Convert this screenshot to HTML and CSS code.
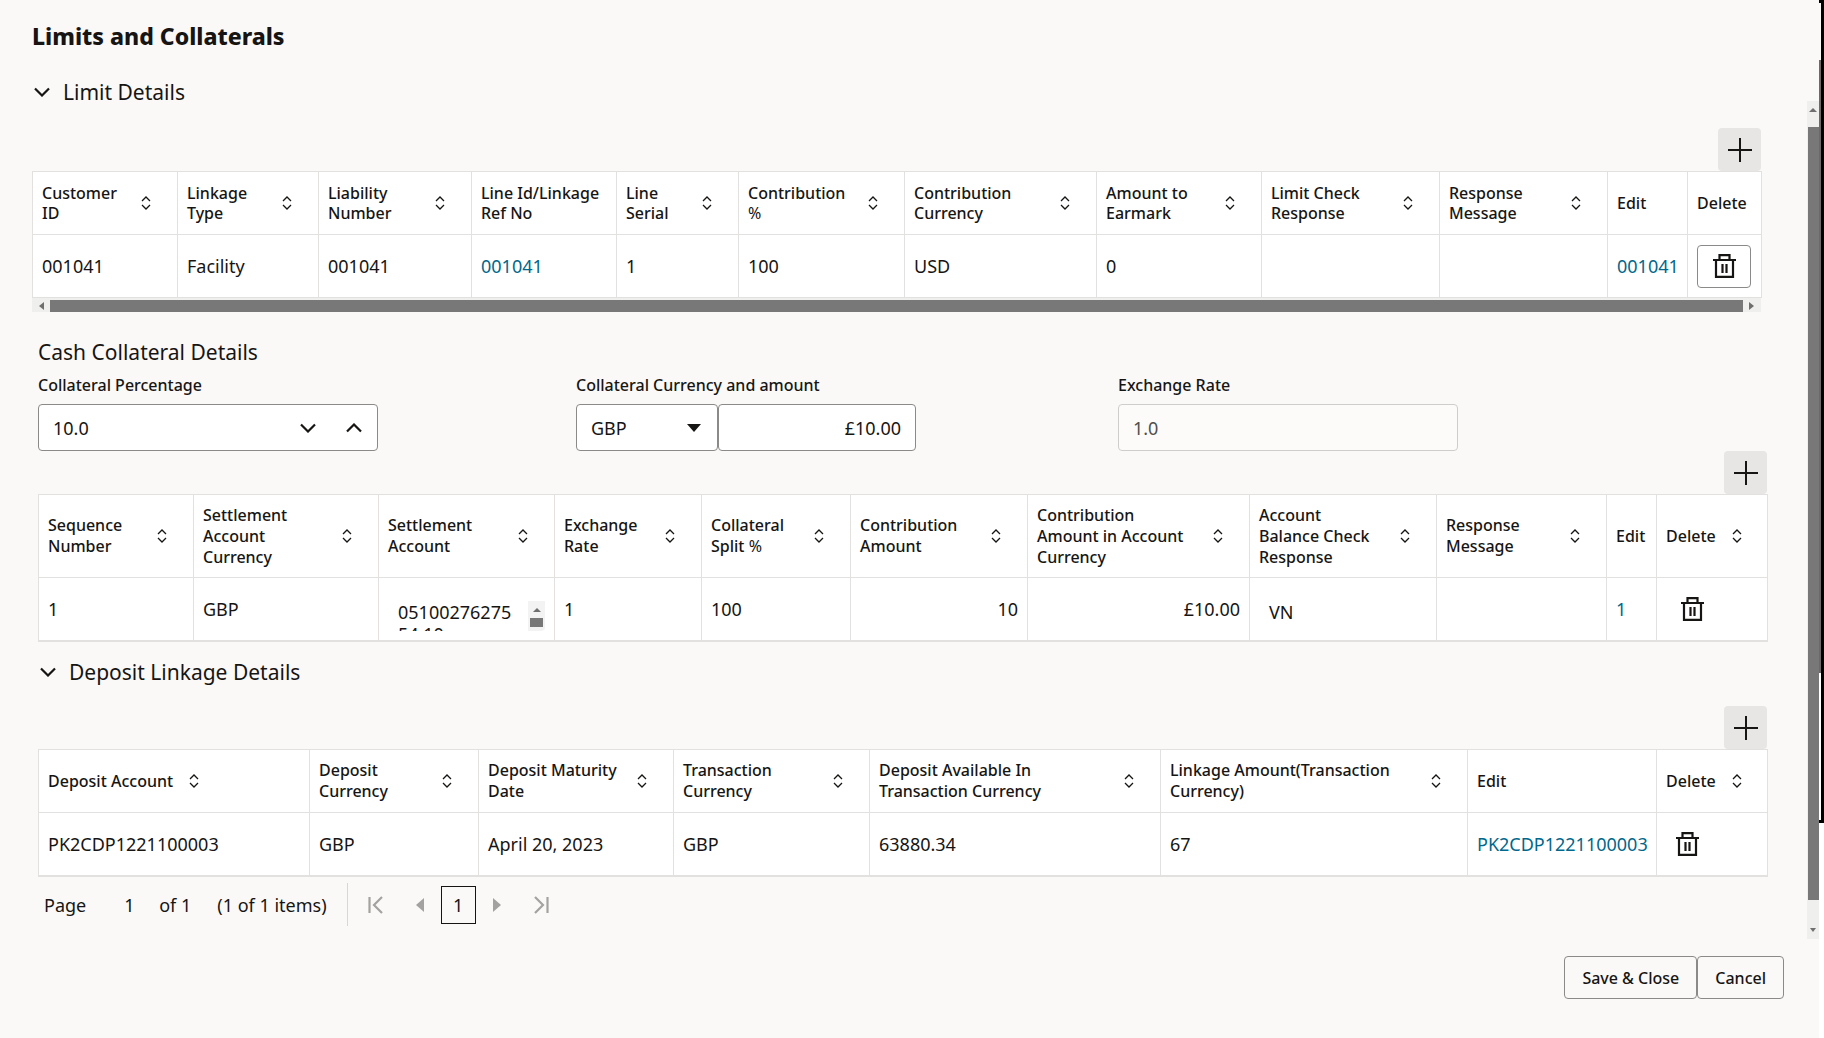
FILE: index.html
```
<!DOCTYPE html>
<html lang="en">
<head>
  <meta charset="UTF-8">
  <title>Limits and Collaterals</title>
  <link rel="stylesheet" href="styles.css">
</head>
<body>

  <!-- shared icons -->
  <svg class="sprite" aria-hidden="true">
    <symbol id="sort" viewBox="0 0 10 14"><path d="M1 5l4-4 4 4M1 9l4 4 4-4" fill="none" stroke="#161513" stroke-width="1.3"/></symbol>
    <symbol id="down" viewBox="0 0 16 10"><path d="M1 1.5l7 7 7-7" fill="none" stroke="#161513" stroke-width="2.2"/></symbol>
    <symbol id="up" viewBox="0 0 16 10"><path d="M1 8.5l7-7 7 7" fill="none" stroke="#161513" stroke-width="2.2"/></symbol>
    <symbol id="plus" viewBox="0 0 24 24"><path d="M12 0v24M0 12h24" fill="none" stroke="#161513" stroke-width="2"/></symbol>
    <symbol id="trash" viewBox="0 0 23 24"><path d="M0 6h23M6.500 6V1.200h10V6M3 6v16.800h17V6M9.500 10v9M13.500 10v9" fill="none" stroke="#161513" stroke-width="2.200"/></symbol>
  </svg>

  <main class="dialog">
    <h1>Limits and Collaterals</h1>

    <section class="limits">
      <h2><button class="collapse" aria-expanded="true"><svg width="16" height="10"><use href="#down"/></svg>Limit Details</button></h2>
      <button class="add" aria-label="Add limit"><svg width="24" height="24"><use href="#plus"/></svg></button>
      <table>
        <colgroup>
          <col width="145"><col width="141"><col width="153"><col width="145"><col width="122"><col width="166">
          <col width="192"><col width="165"><col width="178"><col width="168"><col width="80"><col width="74">
        </colgroup>
        <thead>
          <tr>
            <th><div class="head"><span>Customer ID</span><button class="sort" aria-label="Sort"><svg width="10" height="14"><use href="#sort"/></svg></button></div></th>
            <th><div class="head"><span>Linkage Type</span><button class="sort" aria-label="Sort"><svg width="10" height="14"><use href="#sort"/></svg></button></div></th>
            <th><div class="head"><span>Liability Number</span><button class="sort" aria-label="Sort"><svg width="10" height="14"><use href="#sort"/></svg></button></div></th>
            <th>Line Id/Linkage<br>Ref No</th>
            <th><div class="head"><span>Line Serial</span><button class="sort" aria-label="Sort"><svg width="10" height="14"><use href="#sort"/></svg></button></div></th>
            <th><div class="head"><span>Contribution <span class="thin">%</span></span><button class="sort" aria-label="Sort"><svg width="10" height="14"><use href="#sort"/></svg></button></div></th>
            <th><div class="head"><span>Contribution<br>Currency</span><button class="sort" aria-label="Sort"><svg width="10" height="14"><use href="#sort"/></svg></button></div></th>
            <th><div class="head"><span>Amount to Earmark</span><button class="sort" aria-label="Sort"><svg width="10" height="14"><use href="#sort"/></svg></button></div></th>
            <th><div class="head"><span>Limit Check<br>Response</span><button class="sort" aria-label="Sort"><svg width="10" height="14"><use href="#sort"/></svg></button></div></th>
            <th><div class="head"><span>Response Message</span><button class="sort" aria-label="Sort"><svg width="10" height="14"><use href="#sort"/></svg></button></div></th>
            <th>Edit</th>
            <th>Delete</th>
          </tr>
        </thead>
        <tbody>
          <tr>
            <td>001041</td>
            <td>Facility</td>
            <td>001041</td>
            <td><a href="#">001041</a></td>
            <td>1</td>
            <td>100</td>
            <td>USD</td>
            <td>0</td>
            <td></td>
            <td></td>
            <td><a href="#">001041</a></td>
            <td><button class="trash boxed" aria-label="Delete"><svg width="23" height="24"><use href="#trash"/></svg></button></td>
          </tr>
        </tbody>
      </table>
      <div class="hscroll">
        <svg width="5" height="8"><path d="M5 0v8L0 4z" fill="#6f6f6f"/></svg>
        <div class="hthumb"></div>
        <svg width="5" height="8"><path d="M0 0v8l5-4z" fill="#6f6f6f"/></svg>
      </div>
    </section>

    <section class="cash">
      <h2>Cash Collateral Details</h2>
      <div class="fields">
        <div class="field">
          <label for="percent">Collateral Percentage</label>
          <div class="control">
            <input type="text" id="percent" value="10.0">
            <button class="step" aria-label="Decrease"><svg width="16" height="10"><use href="#down"/></svg></button>
            <button class="step" aria-label="Increase"><svg width="16" height="10"><use href="#up"/></svg></button>
          </div>
        </div>
        <div class="field">
          <label for="amount">Collateral Currency and amount</label>
          <div class="pair">
            <div class="control currency">
              <select id="currency" aria-label="Currency"><option>GBP</option></select>
              <svg width="14" height="8"><path d="M0 0h14L7 8z" fill="#161513"/></svg>
            </div>
            <div class="control money"><input type="text" id="amount" value="£10.00"></div>
          </div>
        </div>
        <div class="field">
          <label for="rate">Exchange Rate</label>
          <div class="control off"><input type="text" id="rate" value="1.0" disabled></div>
        </div>
      </div>

      <button class="add" aria-label="Add collateral"><svg width="24" height="24"><use href="#plus"/></svg></button>
      <table class="closed">
        <colgroup>
          <col width="155"><col width="185"><col width="176"><col width="147"><col width="149"><col width="177">
          <col width="222"><col width="187"><col width="170"><col width="50"><col width="111">
        </colgroup>
        <thead class="tall">
          <tr>
            <th><div class="head"><span>Sequence Number</span><button class="sort" aria-label="Sort"><svg width="10" height="14"><use href="#sort"/></svg></button></div></th>
            <th><div class="head"><span>Settlement<br>Account<br>Currency</span><button class="sort" aria-label="Sort"><svg width="10" height="14"><use href="#sort"/></svg></button></div></th>
            <th><div class="head"><span>Settlement<br>Account</span><button class="sort" aria-label="Sort"><svg width="10" height="14"><use href="#sort"/></svg></button></div></th>
            <th><div class="head"><span>Exchange Rate</span><button class="sort" aria-label="Sort"><svg width="10" height="14"><use href="#sort"/></svg></button></div></th>
            <th><div class="head"><span>Collateral<br>Split <span class="thin">%</span></span><button class="sort" aria-label="Sort"><svg width="10" height="14"><use href="#sort"/></svg></button></div></th>
            <th><div class="head"><span>Contribution Amount</span><button class="sort" aria-label="Sort"><svg width="10" height="14"><use href="#sort"/></svg></button></div></th>
            <th><div class="head"><span>Contribution<br>Amount in Account Currency</span><button class="sort" aria-label="Sort"><svg width="10" height="14"><use href="#sort"/></svg></button></div></th>
            <th><div class="head"><span>Account<br>Balance Check Response</span><button class="sort" aria-label="Sort"><svg width="10" height="14"><use href="#sort"/></svg></button></div></th>
            <th><div class="head"><span>Response<br>Message</span><button class="sort" aria-label="Sort"><svg width="10" height="14"><use href="#sort"/></svg></button></div></th>
            <th>Edit</th>
            <th><div class="head fit"><span>Delete</span><button class="sort" aria-label="Sort"><svg width="10" height="14"><use href="#sort"/></svg></button></div></th>
          </tr>
        </thead>
        <tbody>
          <tr>
            <td>1</td>
            <td>GBP</td>
            <td>
              <div class="account">
                <span>05100276275<br>54 10</span>
                <div class="vscroll">
                  <svg width="8" height="4"><path d="M0 4h8L4 0z" fill="#6f6f6f"/></svg>
                  <div class="vthumb"></div>
                </div>
              </div>
            </td>
            <td>1</td>
            <td>100</td>
            <td class="num">10</td>
            <td class="num">£10.00</td>
            <td class="inset">VN</td>
            <td></td>
            <td><a href="#">1</a></td>
            <td><button class="trash wide" aria-label="Delete"><svg width="23" height="24"><use href="#trash"/></svg></button></td>
          </tr>
        </tbody>
      </table>
    </section>

    <section class="deposit">
      <h2><button class="collapse" aria-expanded="true"><svg width="16" height="10"><use href="#down"/></svg>Deposit Linkage Details</button></h2>
      <button class="add" aria-label="Add deposit"><svg width="24" height="24"><use href="#plus"/></svg></button>
      <table class="closed">
        <colgroup>
          <col width="271"><col width="169"><col width="195"><col width="196"><col width="291"><col width="307"><col width="189"><col width="111">
        </colgroup>
        <thead>
          <tr>
            <th><div class="head fit"><span>Deposit Account</span><button class="sort" aria-label="Sort"><svg width="10" height="14"><use href="#sort"/></svg></button></div></th>
            <th><div class="head"><span>Deposit<br>Currency</span><button class="sort" aria-label="Sort"><svg width="10" height="14"><use href="#sort"/></svg></button></div></th>
            <th><div class="head"><span>Deposit Maturity<br>Date</span><button class="sort" aria-label="Sort"><svg width="10" height="14"><use href="#sort"/></svg></button></div></th>
            <th><div class="head"><span>Transaction<br>Currency</span><button class="sort" aria-label="Sort"><svg width="10" height="14"><use href="#sort"/></svg></button></div></th>
            <th><div class="head"><span>Deposit Available In<br>Transaction Currency</span><button class="sort" aria-label="Sort"><svg width="10" height="14"><use href="#sort"/></svg></button></div></th>
            <th><div class="head"><span>Linkage Amount(Transaction Currency)</span><button class="sort" aria-label="Sort"><svg width="10" height="14"><use href="#sort"/></svg></button></div></th>
            <th>Edit</th>
            <th><div class="head fit"><span>Delete</span><button class="sort" aria-label="Sort"><svg width="10" height="14"><use href="#sort"/></svg></button></div></th>
          </tr>
        </thead>
        <tbody>
          <tr>
            <td>PK2CDP1221100003</td>
            <td>GBP</td>
            <td>April 20, 2023</td>
            <td>GBP</td>
            <td>63880.34</td>
            <td>67</td>
            <td><a href="#">PK2CDP1221100003</a></td>
            <td><button class="trash" aria-label="Delete"><svg width="23" height="24"><use href="#trash"/></svg></button></td>
          </tr>
        </tbody>
      </table>

      <div class="pager">
        <div class="pages">
          <label for="page">Page</label>
          <input type="text" id="page" value="1">
          <span class="of">of 1</span>
          <span>(1 of 1 items)</span>
        </div>
        <button aria-label="First page" disabled><svg width="16" height="18"><path d="M1.500 1v16M14 1L6 9l8 8" fill="none" stroke="#a3a2a0" stroke-width="2.200"/></svg></button>
        <button aria-label="Previous page" disabled><svg width="8" height="14"><path d="M8 0v14L0 7z" fill="#a3a2a0"/></svg></button>
        <button class="current">1</button>
        <button aria-label="Next page" disabled><svg width="8" height="14"><path d="M0 0v14l8-7z" fill="#a3a2a0"/></svg></button>
        <button aria-label="Last page" disabled><svg width="16" height="18"><path d="M14.500 1v16M2 1l8 8-8 8" fill="none" stroke="#a3a2a0" stroke-width="2.200"/></svg></button>
      </div>
    </section>

    <div class="actions">
      <button>Save &amp; Close</button>
      <button>Cancel</button>
    </div>
  </main>

  <div class="rail">
    <div class="track">
      <svg width="8" height="4"><path d="M0 4h8L4 0z" fill="#6f6f6f"/></svg>
      <div class="thumb"></div>
      <svg width="6" height="4"><path d="M0 0h6L3 4z" fill="#6f6f6f"/></svg>
    </div>
  </div>
  <div class="edge"><div class="frame"></div></div>

</body>
</html>
```
FILE: styles.css
```
* {
  box-sizing: border-box;
}
body {
  margin: 0;
  display: flex;
  min-height: 100vh;
  background: #fbf9f8;
  color: #161513;
  font-family: "Noto Sans", "Open Sans", sans-serif;
  font-size: 18px;
  line-height: 24px;
  font-weight: 400;
}
button, input, select {
  font: inherit;
  color: inherit;
  margin: 0;
  padding: 0;
  border: none;
  background: none;
}
button {
  cursor: pointer;
}
svg {
  display: block;
  flex: none;
}
a {
  color: #00688c;
  text-decoration: none;
}
.sprite {
  position: absolute;
  width: 0;
  height: 0;
}

.dialog {
  flex: 1;
  min-width: 0;
  padding-top: 20px;
}
h1 {
  margin: 0 32px 26px;
  font-size: 23px;
  line-height: 32px;
  font-weight: 800;
}
h2 {
  margin: 0;
  font-size: 21px;
  line-height: 28px;
  font-weight: 450;
}
.limits {
  margin: 0 46px 0 32px;
}
.cash, .deposit {
  margin: 0 40px 0 38px;
}
.cash {
  padding-top: 26px;
}
.deposit {
  padding-top: 16px;
}
.collapse {
  display: flex;
  align-items: center;
  gap: 13px;
  padding-left: 2px;
}
.add {
  display: flex;
  align-items: center;
  justify-content: center;
  width: 43px;
  height: 43px;
  margin-left: auto;
  border-radius: 4px;
  background: #e8e6e4;
}
h2 + .add {
  margin-top: 22px;
}
.deposit h2 + .add {
  margin-top: 20px;
}

/* tables */
table {
  width: 100%;
  table-layout: fixed;
  border-collapse: separate;
  border-spacing: 0;
  border-top: 1px solid #e2e1df;
  border-left: 1px solid #e2e1df;
  background: white;
}
th, td {
  height: 63px;
  padding: 0 9px;
  border-right: 1px solid #e2e1df;
  border-bottom: 1px solid #e2e1df;
  text-align: left;
  vertical-align: middle;
}
th {
  font-size: 16px;
  line-height: 20px;
  font-weight: 550;
  white-space: nowrap;
}
.closed th {
  line-height: 21px;
}
.closed td {
  height: 64px;
  border-bottom-width: 2px;
}
.tall th {
  height: 83px;
}
.head {
  display: flex;
  align-items: center;
  gap: 16px;
  padding-right: 17px;
}
.head > span {
  flex: 1;
  white-space: normal;
}
.head.fit > span {
  flex: none;
}
.thin {
  font-weight: 400;
}
td.num {
  text-align: right;
}
td.inset {
  padding: 6px 0 0 19px;
}
.trash {
  display: flex;
  align-items: center;
  margin-left: 10px;
}
.trash.wide {
  margin-left: 15px;
}
.trash.boxed {
  justify-content: center;
  width: 54px;
  height: 43px;
  margin-left: 0;
  border: 1px solid #8b8a88;
  border-radius: 4px;
}

.hscroll {
  display: flex;
  align-items: center;
  gap: 6px;
  height: 14px;
  padding: 2px 7px 0;
  background: #efefed;
}
.hthumb {
  flex: 1;
  height: 12px;
  background: #787878;
}

.account {
  display: flex;
  justify-content: space-between;
  height: 30px;
  margin-top: 14px;
  padding-left: 10px;
  line-height: 22px;
  overflow: hidden;
}
.vscroll {
  width: 17px;
  padding-top: 7px;
  background: #f3f3f3;
  border-radius: 0 0 4px 0;
}
.vscroll svg {
  margin: 0 auto 6px;
}
.vthumb {
  width: 13px;
  height: 9px;
  margin: 0 auto;
  background: #787878;
}

/* form */
.fields {
  display: grid;
  grid-template-columns: 538fr 542fr 340px;
  margin-top: 9px;
  margin-right: 309px;
}
.field {
  width: 340px;
}
label {
  display: block;
}
.field label {
  margin-bottom: 9px;
  font-size: 16px;
  line-height: 20px;
  font-weight: 500;
}
.pair {
  display: flex;
}
.control {
  display: flex;
  align-items: center;
  height: 47px;
  border: 1px solid #8b8a88;
  border-radius: 4px;
  background: white;
}
.control input, .control select {
  flex: 1;
  min-width: 0;
  height: 100%;
  padding: 0 14px;
  appearance: none;
  outline: none;
}
.control.off {
  border-color: #cfcdcb;
  background: #fcfbfa;
  color: #504f4d;
}
.step {
  display: flex;
  align-items: center;
  justify-content: center;
  width: 46px;
  height: 45px;
}
.currency {
  width: 142px;
  padding-right: 16px;
}
.money {
  width: 198px;
}
.money input {
  text-align: right;
}

/* paging */
.pager {
  display: flex;
  align-items: center;
  height: 43px;
  margin-top: 6px;
}
.pages {
  display: flex;
  align-items: center;
  height: 43px;
  padding: 0 20px 0 6px;
  margin-right: 20px;
  border-right: 1px solid #d9d7d5;
}
.pages input {
  width: 48px;
  margin: 0 0 0 25px;
  padding-left: 13px;
}
.of {
  margin-right: 26px;
}
.pager > button + button {
  margin-left: 17px;
}
.pager > button:nth-of-type(2) {
  margin-left: 32px;
}
.pager > button:nth-of-type(5) {
  margin-left: 32px;
}
.pager .current {
  width: 35px;
  height: 38px;
  border: 1px solid #161513;
}

.actions {
  display: flex;
  justify-content: flex-end;
  margin: 30px 23px 36px 0;
}
.actions button {
  height: 43px;
  padding: 0 17px;
  border: 1px solid #8b8a88;
  border-radius: 4px;
  font-size: 16px;
  font-weight: 550;
}

/* page scrollbar and the window edge beside it */
.rail {
  display: flex;
  width: 12px;
  padding: 101px 0 99px;
}
.track {
  display: flex;
  flex-direction: column;
  align-items: center;
  width: 12px;
  padding: 7px 0;
  background: #efefed;
}
.thumb {
  flex: 1;
  width: 11px;
  margin: 15px 0 28px;
  background: #787878;
}
.edge {
  width: 5px;
  background: white;
}
.frame {
  height: 823px;
  border: 3px solid black;
  border-left: none;
  background: linear-gradient(#fbf9f8 57px, #706868 57px, #706868 670px, white 670px);
}
```
